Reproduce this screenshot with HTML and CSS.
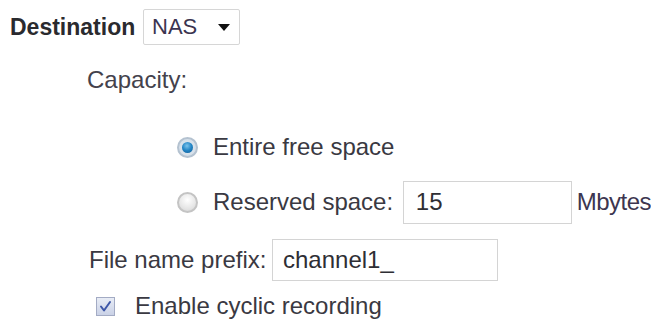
FILE: index.html
```html
<!DOCTYPE html>
<html>
<head>
<meta charset="utf-8">
<link rel="stylesheet" href="styles.css">
</head>
<body>
<div class="page">
  <div class="row dest-row">
    <span class="dest-label">Destination</span>
    <div class="select"><span class="select-val">NAS</span><span class="caret"></span></div>
  </div>
  <div class="row cap-row">Capacity:</div>
  <div class="row radio-row r1">
    <span class="radio checked"><span class="dot"></span></span>
    <span class="radio-label">Entire free space</span>
  </div>
  <div class="row radio-row r2">
    <span class="radio"></span>
    <span class="radio-label reserved-label">Reserved space:</span>
    <div class="input input-space">15</div>
    <span class="unit">Mbytes</span>
  </div>
  <div class="row prefix-row">
    <span class="prefix-label">File name prefix:</span>
    <div class="input input-prefix">channel1_</div>
  </div>
  <div class="row check-row">
    <svg class="check" width="19" height="19" viewBox="0 0 19 19">
      <defs>
        <linearGradient id="cg" x1="0" y1="0" x2="0" y2="1">
          <stop offset="0" stop-color="#e9edf6"/>
          <stop offset="1" stop-color="#c9d1e6"/>
        </linearGradient>
      </defs>
      <rect x="0.5" y="0.5" width="18" height="18" fill="url(#cg)" stroke="#a3abc4"/>
      <path d="M5 9.5 L8 13.5 L14 5" fill="none" stroke="#3d57a8" stroke-width="2" stroke-linecap="round" stroke-linejoin="round"/>
    </svg>
    <span class="check-label">Enable cyclic recording</span>
  </div>
</div>
</body>
</html>
```

FILE: styles.css
```css
html, body {
  margin: 0;
  padding: 0;
  background: #ffffff;
}
body {
  font-family: "Liberation Sans", Arial, sans-serif;
  font-size: 24px;
  color: #3a3942;
}
.page {
  width: 651px;
  height: 326px;
  overflow: hidden;
}
.row {
  display: flex;
  align-items: center;
}
.dest-row {
  padding-top: 9px;
  padding-left: 10px;
  height: 36px;
}
.dest-label {
  box-sizing: border-box;
  width: 133px;
  font-weight: bold;
  color: #2a2a2e;
  font-size: 23px;
}
.select {
  box-sizing: border-box;
  width: 97px;
  height: 36px;
  border: 1px solid #d6d6d6;
  border-radius: 2px;
  display: flex;
  align-items: center;
  padding-left: 8px;
  color: #3b3450;
}
.select-val {
  flex: 1;
  font-size: 22px;
}
.caret {
  width: 0;
  height: 0;
  border-left: 6px solid transparent;
  border-right: 6px solid transparent;
  border-top: 7px solid #111;
  margin-right: 9px;
}
.cap-row {
  margin-top: 22px;
  padding-left: 87px;
  height: 26px;
  color: #44424c;
}
.radio-row {
  padding-left: 177px;
  height: 44px;
}
.r1 {
  margin-top: 32px;
}
.r2 {
  margin-top: 11px;
  height: 44px;
}
.radio {
  box-sizing: border-box;
  width: 21px;
  height: 21px;
  border-radius: 50%;
  border: 2px solid #c4c4c4;
  background: radial-gradient(circle at 50% 35%, #ffffff 0%, #e6e6e6 60%, #d2d2d2 100%);
  margin-right: 15px;
  display: flex;
  align-items: center;
  justify-content: center;
  flex: none;
}
.radio.checked {
  border: 2px solid #b4c2d0;
  background: radial-gradient(circle at 50% 50%, #e8eef4 0%, #ccd8e4 100%);
}
.dot {
  width: 11px;
  height: 11px;
  border-radius: 50%;
  background: radial-gradient(circle at 45% 35%, #7cc4ec 0%, #2284c4 50%, #0d5a94 100%);
}
.reserved-label {
  box-sizing: border-box;
  width: 190px;
}
.input {
  box-sizing: border-box;
  border: 1px solid #d4d4d4;
  display: flex;
  align-items: center;
  padding-left: 12px;
  color: #2e2e34;
  background: #fff;
}
.input-space {
  width: 169px;
  height: 43px;
}
.unit {
  margin-left: 5px;
  color: #3d3650;
  letter-spacing: -0.5px;
}
.prefix-row {
  margin-top: 15px;
  padding-left: 89px;
  height: 42px;
}
.prefix-label {
  box-sizing: border-box;
  width: 183px;
}
.input-prefix {
  width: 226px;
  height: 42px;
  padding-left: 10px;
}
.check-row {
  margin-top: 12px;
  padding-left: 96px;
  height: 26px;
}
.check {
  margin-right: 20px;
  flex: none;
}
```
